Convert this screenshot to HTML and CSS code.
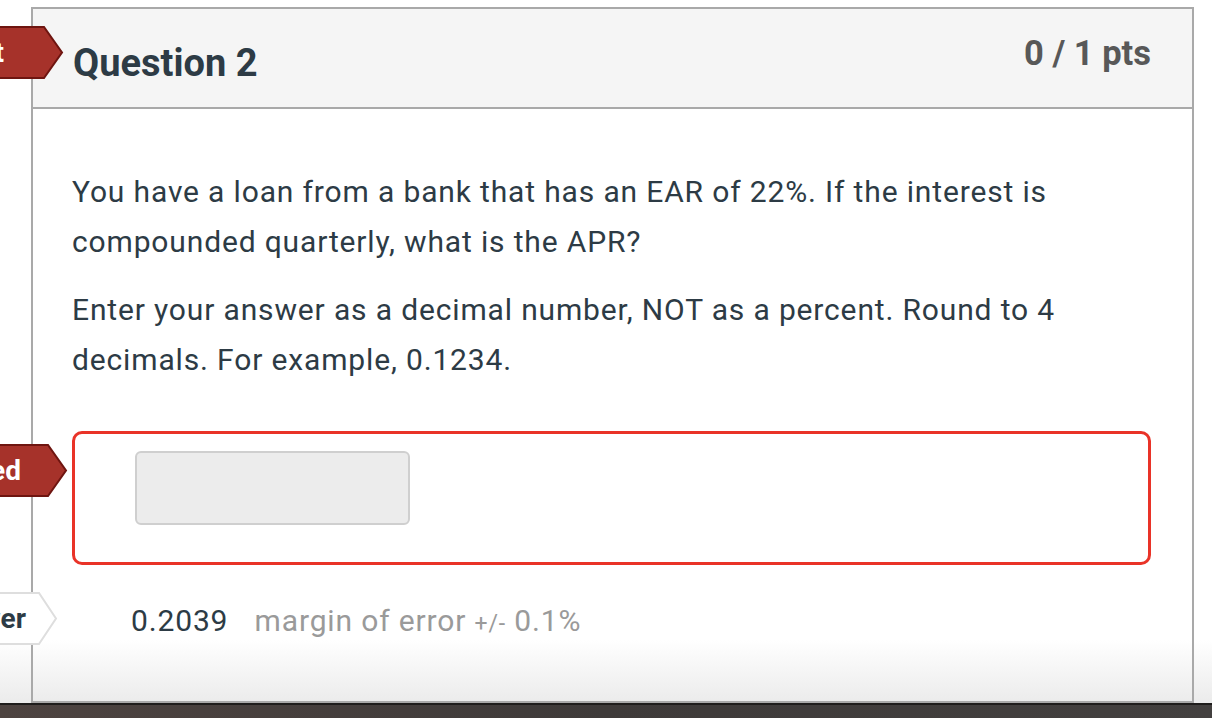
FILE: index.html
```html
<!DOCTYPE html>
<html lang="en">

<head>
  <meta charset="UTF-8">
  <meta name="viewport" content="width=device-width, initial-scale=1.0">
  <title>Quiz results - Question 2</title>
  <link rel="stylesheet" href="styles.css">
</head>

<body>
  <div class="page">
    <!-- answer flags that stick out on the left of the card -->
    <div class="flag flag-red flag-status">
      <svg width="64" height="53" viewBox="0 0 64 53">
        <polygon points="-2,1 44,1 62,26.5 44,52 -2,52" fill="#a6322a" stroke="#6e1510" stroke-width="2" />
      </svg>
      <span class="flag-text">Incorrect</span>
    </div>
    <div class="flag flag-red flag-answered">
      <svg width="68" height="53" viewBox="0 0 68 53">
        <polygon points="-2,1 48,1 66,26.5 48,52 -2,52" fill="#a6322a" stroke="#6e1510" stroke-width="2" />
      </svg>
      <span class="flag-text">You Answered</span>
    </div>
    <div class="flag flag-light flag-correct">
      <svg width="58" height="53" viewBox="0 0 58 53">
        <polygon points="-2,1 39,1 56,26.5 39,52 -2,52" fill="#ffffff" stroke="#dedede" stroke-width="2" />
      </svg>
      <span class="flag-text">Correct Answer</span>
    </div>

    <div class="question">
      <div class="question-header">
        <h2 class="question-title">Question 2</h2>
        <span class="question-points">0 / 1 pts</span>
      </div>
      <div class="question-body">
        <p>You have a loan from a bank that has an EAR of 22%. If the interest is compounded quarterly, what is the APR?</p>
        <p>Enter your answer as a decimal number, NOT as a percent. Round to 4 decimals. For example, 0.1234.</p>
        <div class="answer wrong">
          <input class="answer-input" type="text" disabled>
        </div>
        <div class="correct-row">
          <span class="correct-value">0.2039</span>
          <span class="margin">margin of error <small>+/-</small> 0.1%</span>
        </div>
      </div>
    </div>
  </div>
  <div class="dock"></div>
</body>

</html>
```

FILE: styles.css
```css
html,
body {
  margin: 0;
  padding: 0;
}

body {
  width: 1212px;
  height: 718px;
  overflow: hidden;
  font-family: Roboto, "Liberation Sans", sans-serif;
  color: #2d3b45;
  background: #fff;
}

.page {
  position: relative;
  height: 703px;
  box-sizing: border-box;
  padding: 7px 0 0 31px;
  overflow: hidden;
  background: linear-gradient(to bottom, #fff 640px, #ebebeb 703px);
}

.question {
  width: 1163px;
  height: 696px;
  box-sizing: border-box;
  border: 2px solid #a9a9a9;
}

.question-header {
  height: 100px;
  box-sizing: border-box;
  display: flex;
  justify-content: space-between;
  align-items: flex-start;
  padding: 0 41px 0 40px;
  background: #f5f5f5;
  border-bottom: 2px solid #a9a9a9;
}

.question-title {
  margin: 31px 0 0;
  font-size: 38px;
  line-height: 46px;
  font-weight: bold;
  color: #2d3b45;
}

.question-points {
  margin-top: 23px;
  font-size: 34.5px;
  line-height: 42px;
  font-weight: bold;
  color: #585858;
}

.question-body {
  padding: 58px 40px 0 39px;
}

.question-body p {
  margin: 0 0 18px;
  font-size: 30px;
  line-height: 50px;
  letter-spacing: 0.85px;
}

.answer {
  margin-top: 46px;
  height: 134px;
  box-sizing: border-box;
  padding: 17px 0 0 60px;
  border: 3px solid #e93328;
  border-radius: 10px;
  width: 1079px;
}

.answer-input {
  display: block;
  width: 275px;
  height: 74px;
  box-sizing: border-box;
  margin: 0;
  background: #ececec;
  border: 2px solid #cfcfcf;
  border-radius: 6px;
}

.correct-row {
  margin-top: 31px;
  padding-left: 59px;
  font-size: 30px;
  line-height: 50px;
  letter-spacing: 0.85px;
}

.correct-value {
  margin-right: 18px;
}

.margin {
  color: #9a9a9a;
}

.margin small {
  font-size: 23px;
}

/* flags */
.flag {
  position: absolute;
  left: 0;
  height: 53px;
}

.flag svg {
  display: block;
}

.flag-text {
  position: absolute;
  top: 0;
  line-height: 53px;
  font-size: 28px;
  font-weight: bold;
  white-space: nowrap;
}

.flag-red .flag-text {
  color: #fff;
}

.flag-light .flag-text {
  color: #2d3b45;
}

.flag-status {
  top: 26px;
}

.flag-status .flag-text {
  right: 60px;
}

.flag-answered {
  top: 444px;
}

.flag-answered .flag-text {
  right: 47px;
}

.flag-correct {
  top: 592px;
}

.flag-correct .flag-text {
  right: 32px;
}

.dock {
  height: 15px;
  border-top: 2px solid #1f1d1c;
  box-sizing: border-box;
  background: linear-gradient(to right, #4d4340, #3e3a39 50%, #43403f);
}
```
